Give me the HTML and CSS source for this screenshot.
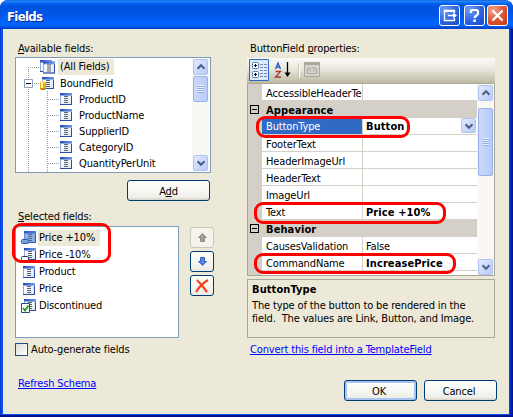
FILE: index.html
```html
<!DOCTYPE html>
<html lang="en">
<head>
<meta charset="utf-8">
<title>Fields</title>
<link rel="stylesheet" href="styles.css">
</head>
<body>
<svg width="0" height="0" class="defs">
  <defs>
    <linearGradient id="cap" x1="0" x2="1"><stop offset="0" stop-color="#2546b5"/><stop offset="1" stop-color="#6f9cf0"/></linearGradient>
    <linearGradient id="paper" x1="0" x2="1" y2="1"><stop offset="0" stop-color="#fff"/><stop offset="1" stop-color="#dbe6fa"/></linearGradient>
    <symbol id="field" viewBox="0 0 12 12">
      <path fill="#8fa6e0" d="M0 0h12v12H0z"/><path fill="url(#paper)" d="M1 3h10v8H1z"/><path fill="url(#cap)" d="M0 0h12v2H0z"/>
      <path fill="#304c9c" d="M11 3h1v9H0v-1h11z"/><path stroke="#606060" d="M4 3.500h4M4 5.500h4M4 7.500h4M4 9.500h4"/>
    </symbol>
    <symbol id="up" viewBox="0 0 16 16"><path fill="none" stroke="#4d6185" stroke-width="2.4" d="M4 10l4-4 4 4"/></symbol>
    <symbol id="down" viewBox="0 0 16 16"><path fill="none" stroke="#4d6185" stroke-width="2.4" d="M4 6l4 4 4-4"/></symbol>
  </defs>
</svg>
<div class="window">
  <header class="titlebar">
    <h1>Fields</h1>
    <span class="tb"><svg width="19" height="19" viewBox="0 0 19 19"><path fill="none" stroke="#fff" stroke-width="1.3" d="M14.5 7V4.5h-10v10h10V12"/><path stroke="#fff" stroke-width="2" d="M4 5h11"/><path stroke="#fff" stroke-width="1.3" d="M8 9.5h8"/><path fill="#fff" d="M13 6.5l4 3-4 3z"/></svg></span>
    <span class="tb help"><svg width="19" height="19" viewBox="0 0 19 19"><path fill="none" stroke="#fff" stroke-width="2.2" d="M6 7V5q0-1 1-1h4q2 0 2 2v1.500q0 1-1.500 2T9.500 12"/><path fill="#fff" d="M8.300 13.500h2.500V16H8.300z"/></svg></span>
    <span class="tb close"><svg width="19" height="19" viewBox="0 0 19 19"><path stroke="#fff" stroke-width="2.300" d="M4.500 4.500l10 10M14.500 4.500l-10 10"/></svg></span>
  </header>
  <main class="body">
    <section class="left">
      <div class="label"><span><u>A</u>vailable fields:</span></div>
      <div class="tree">
        <svg class="lines" width="60" height="114"><g stroke="#9c9c9c" stroke-dasharray="1 1"><path d="M12.500 9v105M12 9.500h12M18 25.500h5M31.500 33v81M32 41.500h12M32 57.500h12M32 73.500h12M32 89.500h12M32 105.500h12"/></g><path fill="#fff" stroke="#8aa0b8" d="M8.500 21.500h8v8h-8z"/><path stroke="#000" d="M10 25.500h5"/></svg>
        <div class="rows">
          <div class="row root"><svg width="17" height="14"><use href="#field" x="1" y="0" width="12" height="12"/><use href="#field" x="4" y="1" width="12" height="13"/></svg><span class="hl">(All Fields)</span></div>
          <div class="row root"><svg width="17" height="14"><use href="#field" x="3" y="1" width="12" height="12"/><path fill="#e8ad18" d="M1 6h6v7H1z"/><path fill="#fff3a0" d="M2 6h2v7H2z"/><ellipse cx="4" cy="6" rx="3" ry="1" fill="#ffe477"/><ellipse cx="4" cy="13" rx="3" ry="1" fill="#c17c00"/></svg><span class="pad">BoundField</span></div>
          <div class="row"><svg width="12" height="12"><use href="#field"/></svg><span>ProductID</span></div>
          <div class="row"><svg width="12" height="12"><use href="#field"/></svg><span>ProductName</span></div>
          <div class="row"><svg width="12" height="12"><use href="#field"/></svg><span>SupplierID</span></div>
          <div class="row"><svg width="12" height="12"><use href="#field"/></svg><span>CategoryID</span></div>
          <div class="row"><svg width="12" height="12"><use href="#field"/></svg><span>QuantityPerUnit</span></div>
        </div>
        <div class="scroll"><span class="sb"><svg width="14" height="14"><use href="#up"/></svg></span><span class="thumb"></span><span class="sb end"><svg width="14" height="14"><use href="#down"/></svg></span></div>
      </div>
      <div class="btn add"><span>A<u>d</u>d</span></div>
      <div class="label sel"><span><u>S</u>elected fields:</span></div>
      <div class="selrow">
        <div class="list">
          <div class="item"><svg width="16" height="14"><use href="#field" x="3" width="12" height="12"/><path fill="#316ac5" opacity=".5" d="M3 0h12v12H3z"/><rect x=".5" y="8.500" width="7" height="4" rx="1" fill="#7ba0dc" stroke="#315ba5"/></svg><span class="hl">Price +10%</span></div>
          <div class="item"><svg width="16" height="14"><use href="#field" x="3" width="12" height="12"/><rect x=".5" y="8.500" width="7" height="4" rx="1" fill="#fff" stroke="#203f77"/></svg><span>Price -10%</span></div>
          <div class="item"><svg width="16" height="14"><use href="#field" x="2" y="1" width="12" height="12"/></svg><span>Product</span></div>
          <div class="item"><svg width="16" height="14"><use href="#field" x="2" y="1" width="12" height="12"/></svg><span>Price</span></div>
          <div class="item"><svg width="16" height="14"><use href="#field" x="3" width="12" height="12"/><path fill="#fff" stroke="#1c5180" d="M.5 4.500h8v9h-8z"/><path fill="none" stroke="#1c9b20" stroke-width="1.800" d="M2 9l2 2.500 3.500-5"/></svg><span>Discontinued</span></div>
        </div>
        <div class="side">
          <span class="sq off"><svg width="9" height="9"><path fill="#a3a197" stroke="#77766f" stroke-width=".7" d="M4.500.5l4 4h-2v4h-4v-4h-2z"/></svg></span>
          <span class="sq"><svg width="9" height="9"><path fill="#4b85ef" stroke="#254fb2" stroke-width=".8" d="M4.500 8.500l4-4h-2v-4h-4v4h-2z"/></svg></span>
          <span class="sq"><svg width="14" height="14"><path fill="none" stroke="#f44320" stroke-width="2.200" d="M2 1q5 5 10 12M13 1Q6 5 1 13"/></svg></span>
        </div>
      </div>
      <div class="check"><span class="box"></span><span>Auto-<u>g</u>enerate fields</span></div>
      <a class="link refresh">Refresh Schema</a>
    </section>
    <section class="right">
      <div class="label rl"><span>ButtonField <u>p</u>roperties:</span></div>
      <div class="toolbar">
        <svg width="90" height="25">
          <path fill="#dfe8f6" stroke="#316ac5" d="M2.500 1.500h19v21h-19z"/>
          <g fill="#fff" stroke="#5c7fb0"><rect x="5.500" y="4.500" width="6" height="6" rx="1"/><rect x="5.500" y="13.500" width="6" height="6" rx="1"/></g>
          <path stroke="#000" d="M7 7.500h3M8.500 6v3M7 16.500h3M8.500 15v3"/>
          <path stroke="#768cc0" stroke-dasharray="3 1" d="M13 6.500h8M13 9.500h8M13 12.500h8M13 15.500h8M13 18.500h8"/>
          <path fill="none" stroke="#315ac0" stroke-width="1.300" d="M28.500 11l2.500-6 2.500 6M29.500 9h3"/>
          <path fill="none" stroke="#a43b3b" stroke-width="1.300" d="M28.500 13.500h5l-5 5.500h5.500"/>
          <path stroke="#000" stroke-width="1.300" d="M40.500 4v13"/><path fill="#000" d="M37.500 14.500h6l-3 4.500z"/>
          <path stroke="#fff" d="M52.500 5v15"/><path stroke="#c5c2b1" d="M51.500 5v15"/>
          <path fill="#d6d4ca" stroke="#aaa79c" d="M57.500 4.500h15v14h-15z"/><path stroke="#aaa79c" stroke-width="2" d="M58 6h14"/><path fill="none" stroke="#aaa79c" d="M60.500 15.500v-5h3l1-1h2v1h3v5zM62 12.500h2M66 12.500h2"/>
        </svg>
      </div>
      <div class="grid">
        <div class="props">
          <div class="prop"><i></i><b>AccessibleHeaderTe</b><em></em></div>
          <div class="cat"><i><s></s></i><strong>Appearance</strong></div>
          <div class="prop on"><i></i><b>ButtonType</b><em><strong>Button</strong><span class="dd"><svg width="14" height="14"><use href="#down"/></svg></span></em></div>
          <div class="prop"><i></i><b>FooterText</b><em></em></div>
          <div class="prop"><i></i><b>HeaderImageUrl</b><em></em></div>
          <div class="prop"><i></i><b>HeaderText</b><em></em></div>
          <div class="prop"><i></i><b>ImageUrl</b><em></em></div>
          <div class="prop"><i></i><b>Text</b><em><strong>Price +10%</strong></em></div>
          <div class="cat"><i><s></s></i><strong>Behavior</strong></div>
          <div class="prop"><i></i><b>CausesValidation</b><em>False</em></div>
          <div class="prop"><i></i><b>CommandName</b><em><strong>IncreasePrice</strong></em></div>
          <div class="prop"><i></i><b></b><em></em></div>
        </div>
        <div class="scroll tall"><span class="sb"><svg width="14" height="14"><use href="#up"/></svg></span><span class="thumb"></span><span class="sb end"><svg width="14" height="14"><use href="#down"/></svg></span></div>
      </div>
      <div class="desc">
        <strong>ButtonType</strong>
        <p>The type of the button to be rendered in the</p>
        <p>field.&nbsp; The values are Link, Button, and Image.</p>
      </div>
      <a class="link conv">Convert this field into a TemplateField</a>
      <div class="actions"><div class="btn ok"><span>OK</span></div><div class="btn cancel"><span>Cancel</span></div></div>
    </section>
  </main>
  <div class="mark m1"></div><div class="mark m2"></div><div class="mark m3"></div><div class="mark m4"></div>
</div>
</body>
</html>
```
FILE: styles.css
```css
* { box-sizing: border-box; }
body { margin: 0; background: #fff; font: 11px/13px "DejaVu Sans Condensed", "DejaVu Sans", sans-serif; font-stretch: condensed; letter-spacing: -0.14px; color: #000; white-space: nowrap; overflow: hidden; }
h1, p { margin: 0; }
svg { display: block; flex: none; }
.defs { position: absolute; }
i, em { font-style: normal; }
b { font-weight: normal; }
strong { letter-spacing: .1px; }
u { text-underline-offset: 1px; }
.window { position: relative; width: 513px; height: 417px; border-radius: 8px 8px 0 0; padding: 0 4px 3px 3px; overflow: hidden; background: linear-gradient(transparent 415px, #00138c 415px), linear-gradient(90deg, #0831d9 0, #0855ea 2px, #0855ea 509px, #0020b8 511px, #00138c 513px); }
.titlebar { height: 29px; margin: 0 -4px 0 -3px; padding: 5px 4px 0 7px; display: flex; background: linear-gradient(#0058c8 0, #2b8aff 1px, #0868f2 3px, #0053e0 6px, #0055e5 14px, #0062fa 22px, #0066ff 25px, #0048d5 28px, #003ac2 29px); }
h1 { flex: 1; font: bold 13px/23px "DejaVu Sans Condensed", "DejaVu Sans", sans-serif; font-stretch: condensed; letter-spacing: -.65px; color: #fff; text-shadow: 1px 1px #0a2a90; }
.tb { width: 21px; height: 21px; margin-right: 4px; border: 1px solid #fff; border-radius: 3px; background: radial-gradient(circle at 25% 20%, #6e9cf4, #2860e0 60%, #1748c8); }
.help { margin-right: 2px; }
.close { margin-right: 1px; background: radial-gradient(circle at 25% 20%, #f0a28a, #dc5230 55%, #c13a15); }
.body { display: flex; height: 385px; background: #ece9d8; }
.left { width: 244px; padding-left: 12px; }
.right { width: 250px; }
.label { height: 28px; padding: 13px 0 0 3px; }
.tree { position: relative; width: 196px; height: 116px; border: 1px solid #7f9db9; background: #fff; display: flex; padding: 1px 1px 1px 0; }
.lines { position: absolute; left: 0; top: 0; }
.rows { position: relative; flex: 1; }
.row { height: 16px; display: flex; align-items: center; padding-left: 44px; gap: 7px; }
.root { padding-left: 23px; gap: 2px; }
.hl { background: #ece9d8; padding: 1px 5px 2px 2px; }
.pad { margin-left: 2px; }
.scroll { width: 17px; display: flex; flex-direction: column; padding: 0 1px; background: #f9f8f5; }
.sb, .dd { width: 15px; height: 16px; border: 1px solid #afc3f0; border-radius: 2px; background: linear-gradient(135deg, #e1eafe, #b9cbf8); flex: none; }
.thumb { height: 26px; margin-top: 1px; border: 1px solid #98b2ee; border-radius: 2px; background: repeating-linear-gradient(#eef4fe 0 1px, #8fa9e0 1px 2px) center / 6px 8px no-repeat, linear-gradient(90deg, #cad8fd, #b9cbf9); }
.end { margin-top: auto; }
.btn { width: 73px; height: 21px; border: 1px solid #003c74; border-radius: 3px; background: linear-gradient(#fff, #f0f0ea 85%, #d6d0c5); display: flex; align-items: center; justify-content: center; }
.add { width: 83px; margin: 7px 0 0 112px; padding-top: 1px; }
.ok { box-shadow: inset 0 0 0 2px #a9c3f3; padding: 1px 3px 0 0; }
.cancel { padding: 1px 3px 0 0; }
.sel { height: 25px; padding-top: 9px; }
.selrow { display: flex; gap: 11px; }
.list { width: 164px; height: 112px; border: 1px solid #7f9db9; background: #fff; padding: 2px 5px; }
.item { height: 17px; display: flex; align-items: center; }
.item span { padding-left: 1px; margin-left: 1px; }
.side { padding-top: 1px; display: grid; gap: 3px; align-content: start; }
.sq { width: 24px; height: 21px; border: 1px solid #003c74; border-radius: 3px; background: linear-gradient(#fff, #ecebe5); display: flex; align-items: center; justify-content: center; }
.off { border-color: #c9c7ba; background: #f5f4ea; }
.check { display: flex; align-items: center; gap: 3px; height: 23px; }
.box { width: 13px; height: 13px; border: 1px solid #1c5180; background: linear-gradient(135deg, #dcdcd7, #fff); }
.link { display: block; color: #00f; text-decoration: underline; text-underline-offset: 1px; }
.refresh { margin: 16px 0 0 3px; }
.rl { height: 29px; }
.toolbar { width: 248px; height: 25px; background: linear-gradient(#fafaf8, #ece9e0 40%, #bdbaa3); }
.grid { width: 248px; height: 193px; border: 1px solid #aca899; background: #d4d0c8; display: flex; overflow: hidden; }
.props { flex: 1; }
.prop, .cat { height: 17px; display: flex; }
.prop i, .cat i { width: 14px; flex: none; }
.prop b { width: 101px; background: #fff; border-right: 1px solid #d4d0c8; border-bottom: 1px solid #d4d0c8; padding: 3px 0 0 4px; }
.prop em { flex: 1; background: #fff; border-bottom: 1px solid #d4d0c8; padding: 3px 0 0 3px; display: flex; justify-content: space-between; }
.prop.on b { background: #316ac5; color: #fff; }
.prop.on b, .prop.on em { padding-top: 2px; }
.dd { margin-top: -2px; margin-right: 1px; height: 15px; }
.cat strong { padding: 3px 0 0 4px; }
.cat s { display: block; width: 9px; height: 9px; margin: 4px 0 0 2px; border: 1px solid #000; background: linear-gradient(#000, #000) center / 5px 1px no-repeat; }
.tall { padding: 1px 1px 0; }
.tall .thumb { height: 68px; margin-top: 7px; }
.desc { width: 248px; height: 59px; margin-top: 3px; border: 1px solid #aca899; padding: 3px 4px; }
.desc strong { display: block; height: 16px; }
.desc p { height: 13px; }
.conv { margin: 5px 0 0 3px; }
.actions { display: flex; gap: 7px; margin: 24px 0 0 97px; }
.mark { position: absolute; border: 3px solid #f00; border-radius: 9px; }
.m1 { left: 12px; top: 223px; width: 99px; height: 40px; }
.m2 { left: 256px; top: 116px; width: 154px; height: 22px; }
.m3 { left: 254px; top: 202px; width: 192px; height: 22px; }
.m4 { left: 254px; top: 253px; width: 202px; height: 21px; }
```
